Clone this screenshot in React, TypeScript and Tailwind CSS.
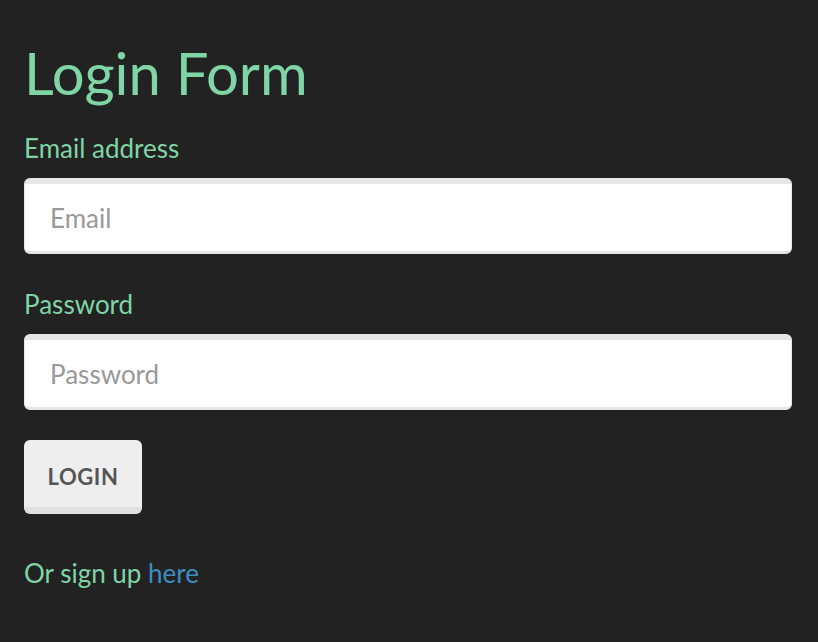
export default function App() {
    return (
        <div className="min-h-[642px] bg-[#222222] pt-[44px] pr-[26px] pl-6 font-['Lato',sans-serif]">
            <h1 className="text-[58px] leading-none font-normal text-[#7fd5a6]">
                Login Form
            </h1>

            <form className="mt-[33px]" onSubmit={(e) => e.preventDefault()}>
                <label className="block text-[26px] leading-none text-[#7fd5a6]">
                    Email address
                </label>
                <input
                    type="email"
                    placeholder="Email"
                    className="mt-[17px] block h-[76px] w-full rounded-md border border-t-[6px] border-b-[3px] border-[#e6e6e6] bg-white px-[25px] text-[26px] text-[#333] placeholder:text-[#999] outline-none"
                />

                <label className="mt-[37px] block text-[26px] leading-none text-[#7fd5a6]">
                    Password
                </label>
                <input
                    type="password"
                    placeholder="Password"
                    className="mt-[17px] block h-[76px] w-full rounded-md border border-t-[6px] border-b-[3px] border-[#e6e6e6] bg-white px-[25px] text-[26px] text-[#333] placeholder:text-[#999] outline-none"
                />

                <button
                    type="submit"
                    className="mt-[30px] block h-[74px] w-[118px] rounded-md border-b-[7px] border-[#e0e0e0] bg-[#eeeeee] pt-[6px] text-[22px] font-bold tracking-wide text-[#555555] uppercase"
                >
                    Login
                </button>
            </form>

            <p className="mt-[46px] text-[26px] leading-none text-[#7fd5a6]">
                Or sign up{' '}
                <a href="#" className="text-[#3d8dc2]">
                    here
                </a>
            </p>
        </div>
    );
}
